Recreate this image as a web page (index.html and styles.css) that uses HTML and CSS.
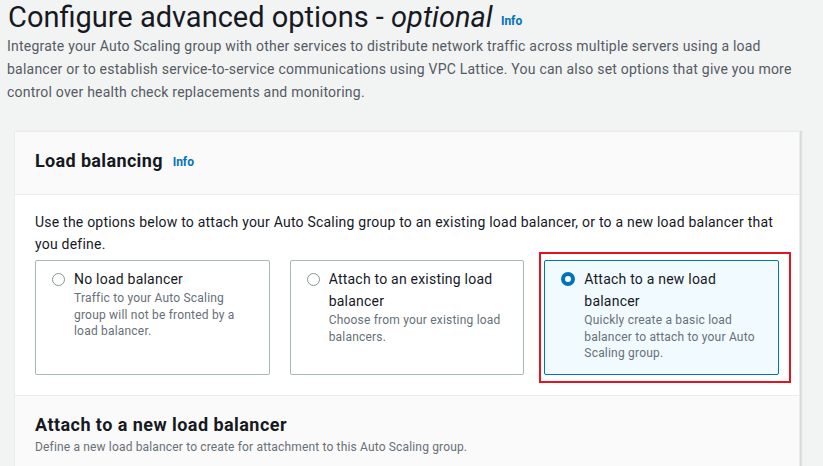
FILE: index.html
```html
<!DOCTYPE html>
<html lang="en">
<head>
<meta charset="utf-8">
<title>Configure advanced options</title>
<link rel="stylesheet" href="styles.css">
</head>
<body>
<div class="page">
  <header class="page-header">
    <h1 class="page-title">Configure advanced options - <em>optional</em> <a class="info" href="#">Info</a></h1>
    <p class="page-desc">Integrate your Auto Scaling group with other services to distribute network traffic across multiple servers using a load balancer or to establish service-to-service communications using VPC Lattice. You can also set options that give you more control over health check replacements and monitoring.</p>
  </header>

  <section class="card">
    <div class="card-header">
      <h2 class="card-title">Load balancing <a class="info" href="#">Info</a></h2>
    </div>
    <div class="card-body">
      <p class="body-desc">Use the options below to attach your Auto Scaling group to an existing load balancer, or to a new load balancer that you define.</p>
      <div class="tiles">
        <label class="tile">
          <span class="radio"></span>
          <span class="tile-text">
            <span class="tile-label">No load balancer</span>
            <span class="tile-desc">Traffic to your Auto Scaling group will not be fronted by a load balancer.</span>
          </span>
        </label>
        <label class="tile">
          <span class="radio"></span>
          <span class="tile-text">
            <span class="tile-label">Attach to an existing load balancer</span>
            <span class="tile-desc">Choose from your existing load balancers.</span>
          </span>
        </label>
        <label class="tile tile-selected">
          <span class="radio radio-checked"></span>
          <span class="tile-text">
            <span class="tile-label">Attach to a new load balancer</span>
            <span class="tile-desc">Quickly create a basic load balancer to attach to your Auto Scaling group.</span>
          </span>
          <span class="highlight"></span>
        </label>
      </div>
    </div>
    <div class="sub-section">
      <h3 class="sub-title">Attach to a new load balancer</h3>
      <p class="sub-desc">Define a new load balancer to create for attachment to this Auto Scaling group.</p>
    </div>
  </section>
</div>
</body>
</html>
```

FILE: styles.css
```css
* { box-sizing: border-box; }
html, body { margin: 0; padding: 0; }
body {
  background: #f2f3f3;
  font-family: Roboto, "Liberation Sans", sans-serif;
  color: #16191f;
  letter-spacing: 0.22px;
  overflow: hidden;
}
.page {
  padding: 0 7px;
}
.page-title {
  margin: 0;
  padding-left: 1px;
  font-size: 29px;
  font-weight: 400;
  line-height: 34px;
  letter-spacing: 0;
  color: #16191f;
}
.page-title em { font-style: italic; }
.info {
  font-size: 12px;
  font-weight: 700;
  line-height: 1;
  letter-spacing: 0;
  color: #0073bb;
  text-decoration: none;
  vertical-align: 2px;
  margin-left: 1px;
}
.page-desc {
  margin: 1px 0 0 0;
  font-size: 14px;
  line-height: 23px;
  color: #545b64;
  max-width: 800px;
}
.card {
  margin: 27px 16px 0 7px;
  background: #fff;
  border: 1px solid #eaeded;
  border-bottom: none;
  box-shadow: 1px 0 0 #d5dbdb, 2px 0 1px rgba(0,0,0,0.08);
}
.card-header {
  background: #fafafa;
  border-bottom: 1px solid #eaeded;
  padding: 18px 20px 22px;
}
.card-title {
  margin: 0;
  font-size: 18px;
  font-weight: 700;
  line-height: 22px;
  letter-spacing: 0.35px;
}
.card-title .info { margin-left: 5px; vertical-align: 1px; }
.card-body {
  padding: 16px 20px 20px;
}
.body-desc {
  margin: 0 0 5px;
  font-size: 14px;
  line-height: 22px;
  color: #16191f;
}
.tiles {
  display: grid;
  grid-template-columns: repeat(3, 1fr);
  gap: 20px;
}
.tile {
  position: relative;
  display: flex;
  gap: 9px;
  align-items: flex-start;
  min-height: 113px;
  padding: 7px 16px 12px 16px;
  border: 1px solid #aab7b8;
  border-radius: 2px;
  background: #fff;
}
.tile-selected {
  background: #f1faff;
  border-color: #0073bb;
}
.radio {
  flex: none;
  width: 13px;
  height: 13px;
  margin-top: 5px;
  border: 1px solid #879596;
  border-radius: 50%;
  background: #fff;
}
.radio-checked {
  width: 14px;
  height: 14px;
  margin-top: 4px;
  border: 4px solid #0073bb;
}
.tile-text { display: flex; flex-direction: column; }
.tile-label {
  font-size: 14px;
  line-height: 22px;
  color: #16191f;
}
.tile-desc {
  font-size: 12px;
  line-height: 16.5px;
  letter-spacing: 0.2px;
  color: #687078;
}
.highlight {
  position: absolute;
  left: -6px;
  top: -9px;
  right: -13px;
  bottom: -9px;
  border: 2px solid #e3141e;
  pointer-events: none;
}
.sub-section {
  background: #fafafa;
  border-top: 1px solid #eaeded;
  padding: 18px 20px 20px;
}
.sub-title {
  margin: 0;
  font-size: 18px;
  font-weight: 700;
  line-height: 22px;
  letter-spacing: 0.45px;
}
.sub-desc {
  margin: 3px 0 0;
  font-size: 12px;
  line-height: 16px;
  letter-spacing: 0.16px;
  color: #687078;
}
```
